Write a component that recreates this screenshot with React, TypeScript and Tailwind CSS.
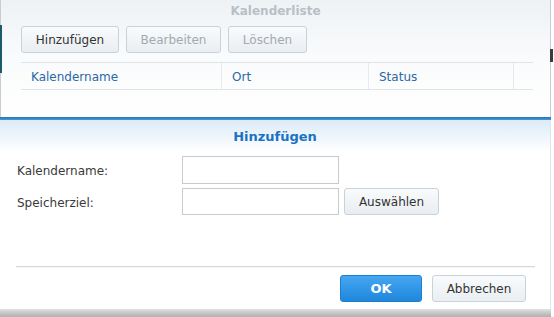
import React from "react";

const font = { fontFamily: '"DejaVu Sans", Verdana, sans-serif' };

function ToolBtn({ label, disabled, w }: { label: string; disabled?: boolean; w: string }) {
  return (
    <div
      className={`${w} h-[27px] flex items-center justify-center rounded-[3px] border border-[#c9d1d9] bg-gradient-to-b from-[#f9fbfc] to-[#e9eef2] text-[12px] ${
        disabled ? "text-[#a3a9af]" : "text-[#333]"
      }`}
    >
      {label}
    </div>
  );
}

export default function App() {
  return (
    <div className="w-[554px] h-[317px] bg-white overflow-hidden relative" style={font}>
      {/* Top window: Kalenderliste */}
      <div className="w-[551px] h-[117px] border-l border-r border-[#c8cdd2] bg-gradient-to-b from-[#eef2f5] via-[#fafbfc] to-white flex flex-col relative">
        <div className="absolute left-[-1px] top-[25px] w-[2px] h-[48px] bg-[#1d5a6e]" />
        <div className="h-[21px] flex items-center justify-center text-[12px] font-bold text-[#b8bfc6]">
          Kalenderliste
        </div>
        <div className="flex gap-[7px] pl-[20px] mt-[5px]">
          <ToolBtn label="Hinzufügen" w="w-[98px]" />
          <ToolBtn label="Bearbeiten" disabled w="w-[95px]" />
          <ToolBtn label="Löschen" disabled w="w-[79px]" />
        </div>
        <div className="ml-[20px] mt-[9px] w-[512px] h-[28px] border-t border-b border-[#dfe4e8] flex text-[12px] text-[#2c68a4]">
          <div className="w-[201px] border-r border-[#e6eaee] flex items-center pl-[10px] pt-[2px]">Kalendername</div>
          <div className="w-[147px] border-r border-[#e6eaee] flex items-center pl-[10px] pt-[2px]">Ort</div>
          <div className="w-[145px] border-r border-[#e6eaee] flex items-center pl-[10px] pt-[2px]">Status</div>
          <div className="flex-1" />
        </div>
        <div className="absolute right-[-3px] top-[49px] w-[3px] h-[13px] bg-[#3a3a3a]" />
      </div>

      {/* Blue bar */}
      <div className="w-[551px] h-[3px] bg-gradient-to-b from-[#1b74b8] to-[#4a9ad6]" />

      {/* Dialog */}
      <div className="w-[551px] h-[189px] flex flex-col border-r border-[#e2e5e8]">
        <div className="h-[32px] bg-gradient-to-b from-[#dcebf8] to-white flex items-center justify-center text-[13px] font-bold text-[#1a72c4] pt-[1px]">
          Hinzufügen
        </div>
        <div className="flex flex-col gap-[4px] mt-[4px]">
          <div className="flex items-center h-[28px]">
            <div className="w-[182px] pl-[17px] text-[12px] text-[#3a3a3a] pt-[2px]">Kalendername:</div>
            <div className="w-[157px] h-[28px] border border-[#c8cbce] bg-white" />
          </div>
          <div className="flex items-center h-[27px]">
            <div className="w-[182px] pl-[17px] text-[12px] text-[#3a3a3a] pt-[3px]">Speicherziel:</div>
            <div className="w-[157px] h-[27px] border border-[#c8cbce] bg-white" />
            <div className="ml-[5px] w-[95px] h-[27px] flex items-center justify-center rounded-[3px] border border-[#c9d1d9] bg-gradient-to-b from-[#f9fbfc] to-[#e9eef2] text-[12px] text-[#333]">
              Auswählen
            </div>
          </div>
        </div>
        <div className="mt-[51px] ml-[16px] w-[519px] h-[2px] border-t border-[#d6d9dc] bg-[#f3f4f5]" />
        <div className="flex mt-[7px] pl-[340px] gap-[10px]">
          <div className="w-[82px] h-[27px] flex items-center justify-center rounded-[3px] border border-[#1f7fcf] bg-gradient-to-b from-[#45a6f2] to-[#1d87dc] text-[13px] font-bold text-white">
            OK
          </div>
          <div className="w-[94px] h-[27px] flex items-center justify-center rounded-[3px] border border-[#c9d1d9] bg-gradient-to-b from-[#f9fbfc] to-[#e9eef2] text-[12px] text-[#333]">
            Abbrechen
          </div>
        </div>
      </div>

      {/* Bottom shadow */}
      <div className="w-[551px] h-[11px] bg-gradient-to-b from-[#e2e2e2] via-[#bdbdbd] to-[#a6a6a6]" />
    </div>
  );
}
